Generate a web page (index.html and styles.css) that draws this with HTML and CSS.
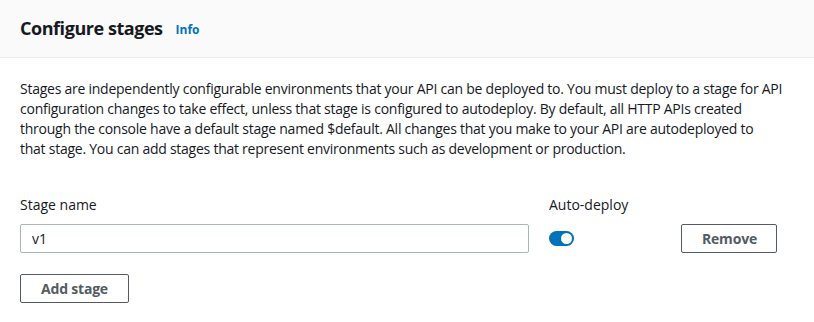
FILE: index.html
```html
<!DOCTYPE html>
<html lang="en">
	<head>
		<title>Configure stages</title>
		<link rel="stylesheet" href="styles.css">
	</head>
	<body>
		<div class='panel'>
			<div class='panel-header'>
				<h2 class='panel-title'>Configure stages</h2>
				<a class='info' href='#'>Info</a>
			</div>
			<div class='panel-body'>
				<p class='desc'>Stages are independently configurable environments that your API can be deployed to. You must deploy to a stage for API configuration changes to take effect, unless that stage is configured to autodeploy. By default, all HTTP APIs created through the console have a default stage named $default. All changes that you make to your API are autodeployed to<br>that stage. You can add stages that represent environments such as development or production.</p>
				<div class='stage-row'>
					<div class='field name-field'>
						<label class='field-label' for='stageName'>Stage name</label>
						<input class='text-input' id='stageName' type='text' value='v1'>
					</div>
					<div class='field deploy-field'>
						<span class='field-label'>Auto-deploy</span>
						<span class='toggle'><span class='knob'></span></span>
					</div>
					<div class='field remove-field'>
						<button class='btn'>Remove</button>
					</div>
				</div>
				<button class='btn add-btn'>Add stage</button>
			</div>
		</div>
	</body>
</html>
```

FILE: styles.css
```css
body {
	margin: 0;
	font-family: "Open Sans", "Noto Sans", sans-serif;
	font-size: 14px;
	color: #16191f;
	background: #fff;
}
.panel-header {
	background: #fafafa;
	border-bottom: 1px solid #eaeded;
	height: 57px;
	padding: 0 20px;
	display: flex;
	align-items: center;
	gap: 13px;
}
.panel-title {
	margin: 0;
	font-size: 18px;
	font-weight: 700;
	line-height: 22px;
	letter-spacing: -0.45px;
	margin-top: -1px;
}
.info {
	color: #0073bb;
	font-size: 12px;
	font-weight: 700;
	text-decoration: none;
	margin-top: 2px;
}
.panel-body {
	padding: 21px 20px 20px;
}
.desc {
	margin: 0;
	line-height: 20px;
	letter-spacing: -0.25px;
	max-width: 775px;
}
.stage-row {
	display: flex;
	margin-top: 36px;
}
.field {
	display: flex;
	flex-direction: column;
}
.field-label {
	line-height: 20px;
	margin-bottom: 9px;
}
.name-field {
	width: 509px;
}
.deploy-field {
	margin-left: 20px;
	width: 132px;
}
.remove-field {
	justify-content: flex-end;
}
.text-input {
	box-sizing: border-box;
	height: 29px;
	border: 1px solid #aab7b8;
	border-radius: 2px;
	padding: 0 11px;
	font: inherit;
	color: #16191f;
}
.toggle {
	position: relative;
	margin-top: 7px;
	width: 25px;
	height: 15px;
	border-radius: 8px;
	background: #0073bb;
}
.knob {
	position: absolute;
	top: 2px;
	right: 2px;
	width: 11px;
	height: 11px;
	border-radius: 50%;
	background: #fff;
}
.btn {
	box-sizing: border-box;
	height: 29px;
	padding: 0 20px;
	border: 1px solid #545b64;
	border-radius: 2px;
	background: #fff;
	color: #545b64;
	font: inherit;
	font-weight: 700;
	letter-spacing: -0.2px;
}
.remove-field .btn {
	width: 96px;
}
.add-btn {
	margin-top: 21px;
	width: 109px;
}
```
